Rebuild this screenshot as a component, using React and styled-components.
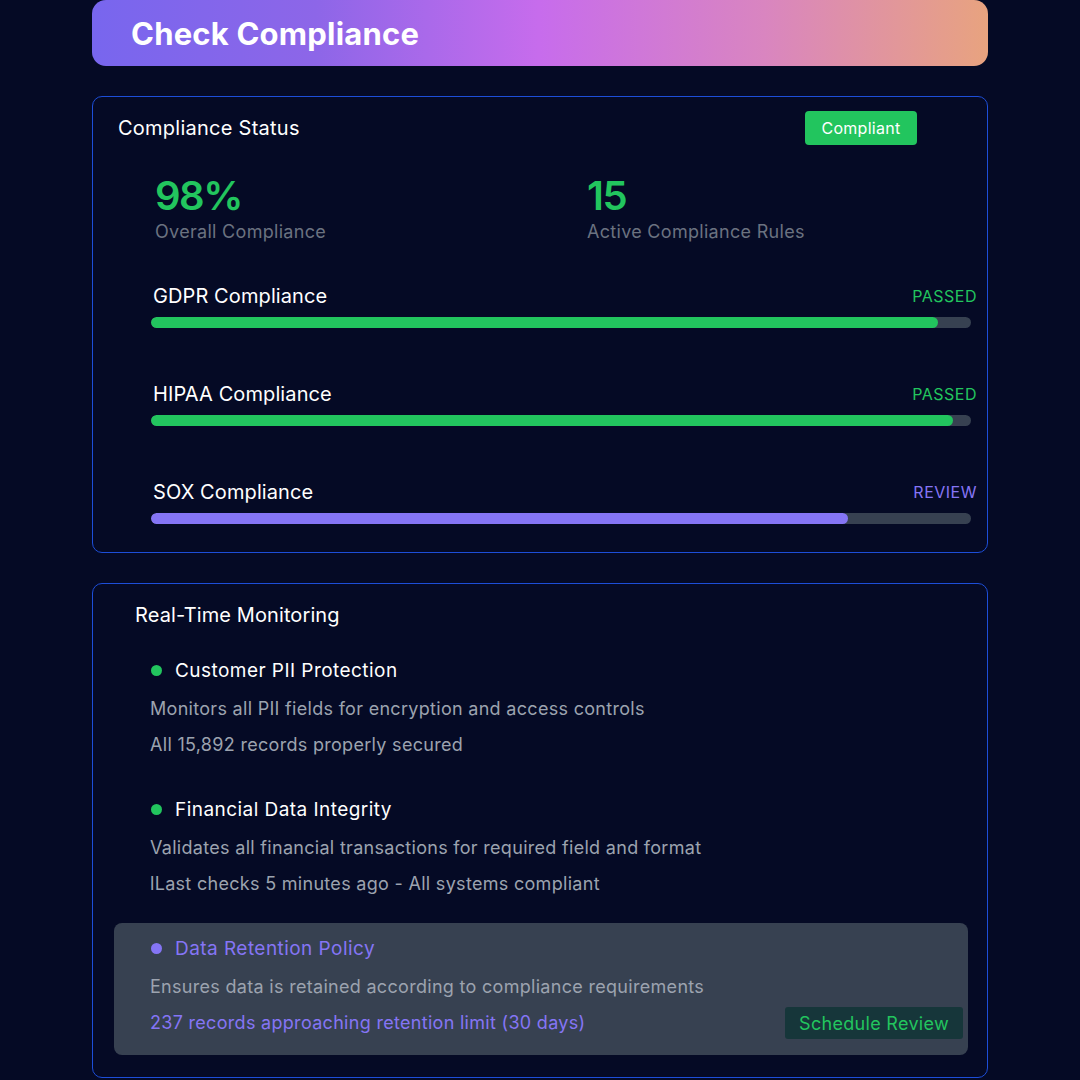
import React from 'react';
import styled, { createGlobalStyle } from 'styled-components';

const COLORS = {
  bg: '#050a25',
  border: '#1d4ed8',
  green: '#22c55e',
  purple: '#8575f5',
  track: '#374151',
  muted: '#6b7280',
  soft: '#9ca3af',
  white: '#ffffff',
};

const STATS = [
  { id: 'overall', value: '98%', label: 'Overall Compliance' },
  { id: 'rules', value: '15', label: 'Active Compliance Rules' },
];

const RULES = [
  { id: 'gdpr', name: 'GDPR Compliance', status: 'PASSED', percent: 96, tone: 'green' },
  { id: 'hipaa', name: 'HIPAA Compliance', status: 'PASSED', percent: 97.8, tone: 'green' },
  { id: 'sox', name: 'SOX Compliance', status: 'REVIEW', percent: 85, tone: 'purple' },
];

const MONITORS = [
  {
    id: 'pii',
    title: 'Customer PII Protection',
    description: 'Monitors all PII fields for encryption and access controls',
    detail: 'All 15,892 records properly secured',
    tone: 'green',
  },
  {
    id: 'financial',
    title: 'Financial Data Integrity',
    description: 'Validates all financial transactions for required field and format',
    detail: 'lLast checks 5 minutes ago - All systems compliant',
    tone: 'green',
  },
  {
    id: 'retention',
    title: 'Data Retention Policy',
    description: 'Ensures data is retained according to compliance requirements',
    detail: '237 records approaching retention limit (30 days)',
    tone: 'purple',
    action: 'Schedule Review',
  },
];

const GlobalStyle = createGlobalStyle`
  html, body {
    margin: 0;
    background: ${COLORS.bg};
  }
  body {
    font-family: Inter, "Open Sans", sans-serif;
    color: ${COLORS.white};
  }
`;

const App = () => {
  return (
    <>
      <GlobalStyle />
      <Page>
        <Header>
          <HeaderTitle>Check Compliance</HeaderTitle>
        </Header>

        <StatusCard>
          <CardHeader>
            <CardTitle>Compliance Status</CardTitle>
            <Badge>Compliant</Badge>
          </CardHeader>

          <StatsGrid>
            {STATS.map((stat) => (
              <Stat key={stat.id}>
                <StatValue>{stat.value}</StatValue>
                <StatLabel>{stat.label}</StatLabel>
              </Stat>
            ))}
          </StatsGrid>

          <RuleList>
            {RULES.map((rule) => (
              <Rule key={rule.id}>
                <RuleHead>
                  <RuleName>{rule.name}</RuleName>
                  <RuleStatus tone={rule.tone}>{rule.status}</RuleStatus>
                </RuleHead>
                <Track>
                  <Fill tone={rule.tone} style={{ width: `${rule.percent}%` }} />
                </Track>
              </Rule>
            ))}
          </RuleList>
        </StatusCard>

        <MonitorCard>
          <MonitorTitle>Real-Time Monitoring</MonitorTitle>
          <MonitorList>
            {MONITORS.map((item) => (
              <MonitorItem key={item.id} highlight={!!item.action}>
                <ItemTitleRow>
                  <Dot tone={item.tone} />
                  <ItemTitle tone={item.tone}>{item.title}</ItemTitle>
                </ItemTitleRow>
                <ItemText>{item.description}</ItemText>
                <DetailRow>
                  <DetailText tone={item.action ? 'purple' : undefined}>{item.detail}</DetailText>
                  {item.action && <ActionButton>{item.action}</ActionButton>}
                </DetailRow>
              </MonitorItem>
            ))}
          </MonitorList>
        </MonitorCard>
      </Page>
    </>
  );
};

const toneColor = (tone, fallback) =>
  tone === 'green' ? COLORS.green : tone === 'purple' ? COLORS.purple : fallback;

const Page = styled.div`
  width: 896px;
  margin: 0 auto;
  display: flex;
  flex-direction: column;
  gap: 30px;
`;

const Header = styled.header`
  height: 66px;
  border-radius: 14px;
  background: linear-gradient(90deg, #7866ee 0%, #8d66e8 25%, #c76cec 50%, #d985c0 75%, #e8a37f 100%);
  display: flex;
  align-items: center;
  padding-left: 39px;
`;

const HeaderTitle = styled.h1`
  margin: 0;
  font-size: 31px;
  font-weight: 700;
  letter-spacing: 0.2px;
  color: ${COLORS.white};
`;

const Card = styled.section`
  border: 1px solid ${COLORS.border};
  border-radius: 10px;
  background: ${COLORS.bg};
`;

const StatusCard = styled(Card)`
  padding: 14px 10px 28px 25px;
`;

const CardHeader = styled.div`
  display: flex;
  align-items: center;
  justify-content: space-between;
  height: 34px;
  padding-right: 60px;
`;

const CardTitle = styled.h2`
  margin: 0;
  font-size: 20px;
  font-weight: 400;
  line-height: 28px;
  letter-spacing: 0.25px;
`;

const Badge = styled.span`
  background: ${COLORS.green};
  color: ${COLORS.white};
  border-radius: 4px;
  height: 34px;
  width: 112px;
  display: flex;
  align-items: center;
  justify-content: center;
  font-size: 16px;
  letter-spacing: 0.3px;
`;

const StatsGrid = styled.div`
  display: grid;
  grid-template-columns: 432px 1fr;
  margin-top: 27px;
  padding-left: 37px;
`;

const Stat = styled.div`
  display: flex;
  flex-direction: column;
`;

const StatValue = styled.div`
  font-size: 40px;
  font-weight: 600;
  line-height: 48px;
  letter-spacing: -1.5px;
  color: ${COLORS.green};
`;

const StatLabel = styled.div`
  font-size: 18px;
  line-height: 24px;
  letter-spacing: 0.3px;
  color: ${COLORS.muted};
`;

const RuleList = styled.div`
  display: flex;
  flex-direction: column;
  gap: 52px;
  margin-top: 38px;
  padding-left: 33px;
`;

const Rule = styled.div`
  display: flex;
  flex-direction: column;
  gap: 7px;
`;

const RuleHead = styled.div`
  display: flex;
  justify-content: space-between;
  align-items: center;
  padding-left: 2px;
`;

const RuleName = styled.span`
  font-size: 20px;
  line-height: 28px;
  letter-spacing: 0.1px;
`;

const RuleStatus = styled.span`
  font-size: 16px;
  letter-spacing: 0.5px;
  color: ${(p) => toneColor(p.tone, COLORS.soft)};
`;

const Track = styled.div`
  height: 11px;
  width: 820px;
  border-radius: 6px;
  background: ${COLORS.track};
  overflow: hidden;
`;

const Fill = styled.div`
  height: 100%;
  border-radius: 6px;
  background: ${(p) => toneColor(p.tone, COLORS.green)};
`;

const MonitorCard = styled(Card)`
  padding: 17px 19px 22px 21px;
`;

const MonitorTitle = styled.h2`
  margin: 0 0 16px 21px;
  font-size: 20px;
  font-weight: 400;
  line-height: 28px;
  letter-spacing: 0.1px;
`;

const MonitorList = styled.div`
  display: flex;
  flex-direction: column;
  gap: 7px;
`;

const MonitorItem = styled.div`
  display: flex;
  flex-direction: column;
  padding: 12px 5px 16px 36px;
  border-radius: 8px;
  background: ${(p) => (p.highlight ? COLORS.track : 'transparent')};
`;

const ItemTitleRow = styled.div`
  display: flex;
  align-items: center;
  gap: 13px;
  height: 26px;
  padding-left: 1px;
`;

const Dot = styled.span`
  width: 11px;
  height: 11px;
  border-radius: 50%;
  background: ${(p) => toneColor(p.tone, COLORS.green)};
`;

const ItemTitle = styled.span`
  font-size: 19px;
  letter-spacing: 0.45px;
  color: ${(p) => (p.tone === 'purple' ? COLORS.purple : COLORS.white)};
`;

const ItemText = styled.span`
  font-size: 18px;
  line-height: 24px;
  letter-spacing: 0.3px;
  margin-top: 14px;
  color: ${COLORS.soft};
`;

const DetailRow = styled.div`
  display: flex;
  justify-content: space-between;
  align-items: center;
  height: 32px;
  margin-top: 8px;
`;

const DetailText = styled.span`
  font-size: 18px;
  line-height: 24px;
  letter-spacing: 0.3px;
  color: ${(p) => toneColor(p.tone, COLORS.soft)};
`;

const ActionButton = styled.button`
  border: none;
  border-radius: 3px;
  background: #16363a;
  color: ${COLORS.green};
  font-family: inherit;
  font-size: 18px;
  letter-spacing: 0.3px;
  height: 32px;
  padding: 0 14px;
`;

export default App;
